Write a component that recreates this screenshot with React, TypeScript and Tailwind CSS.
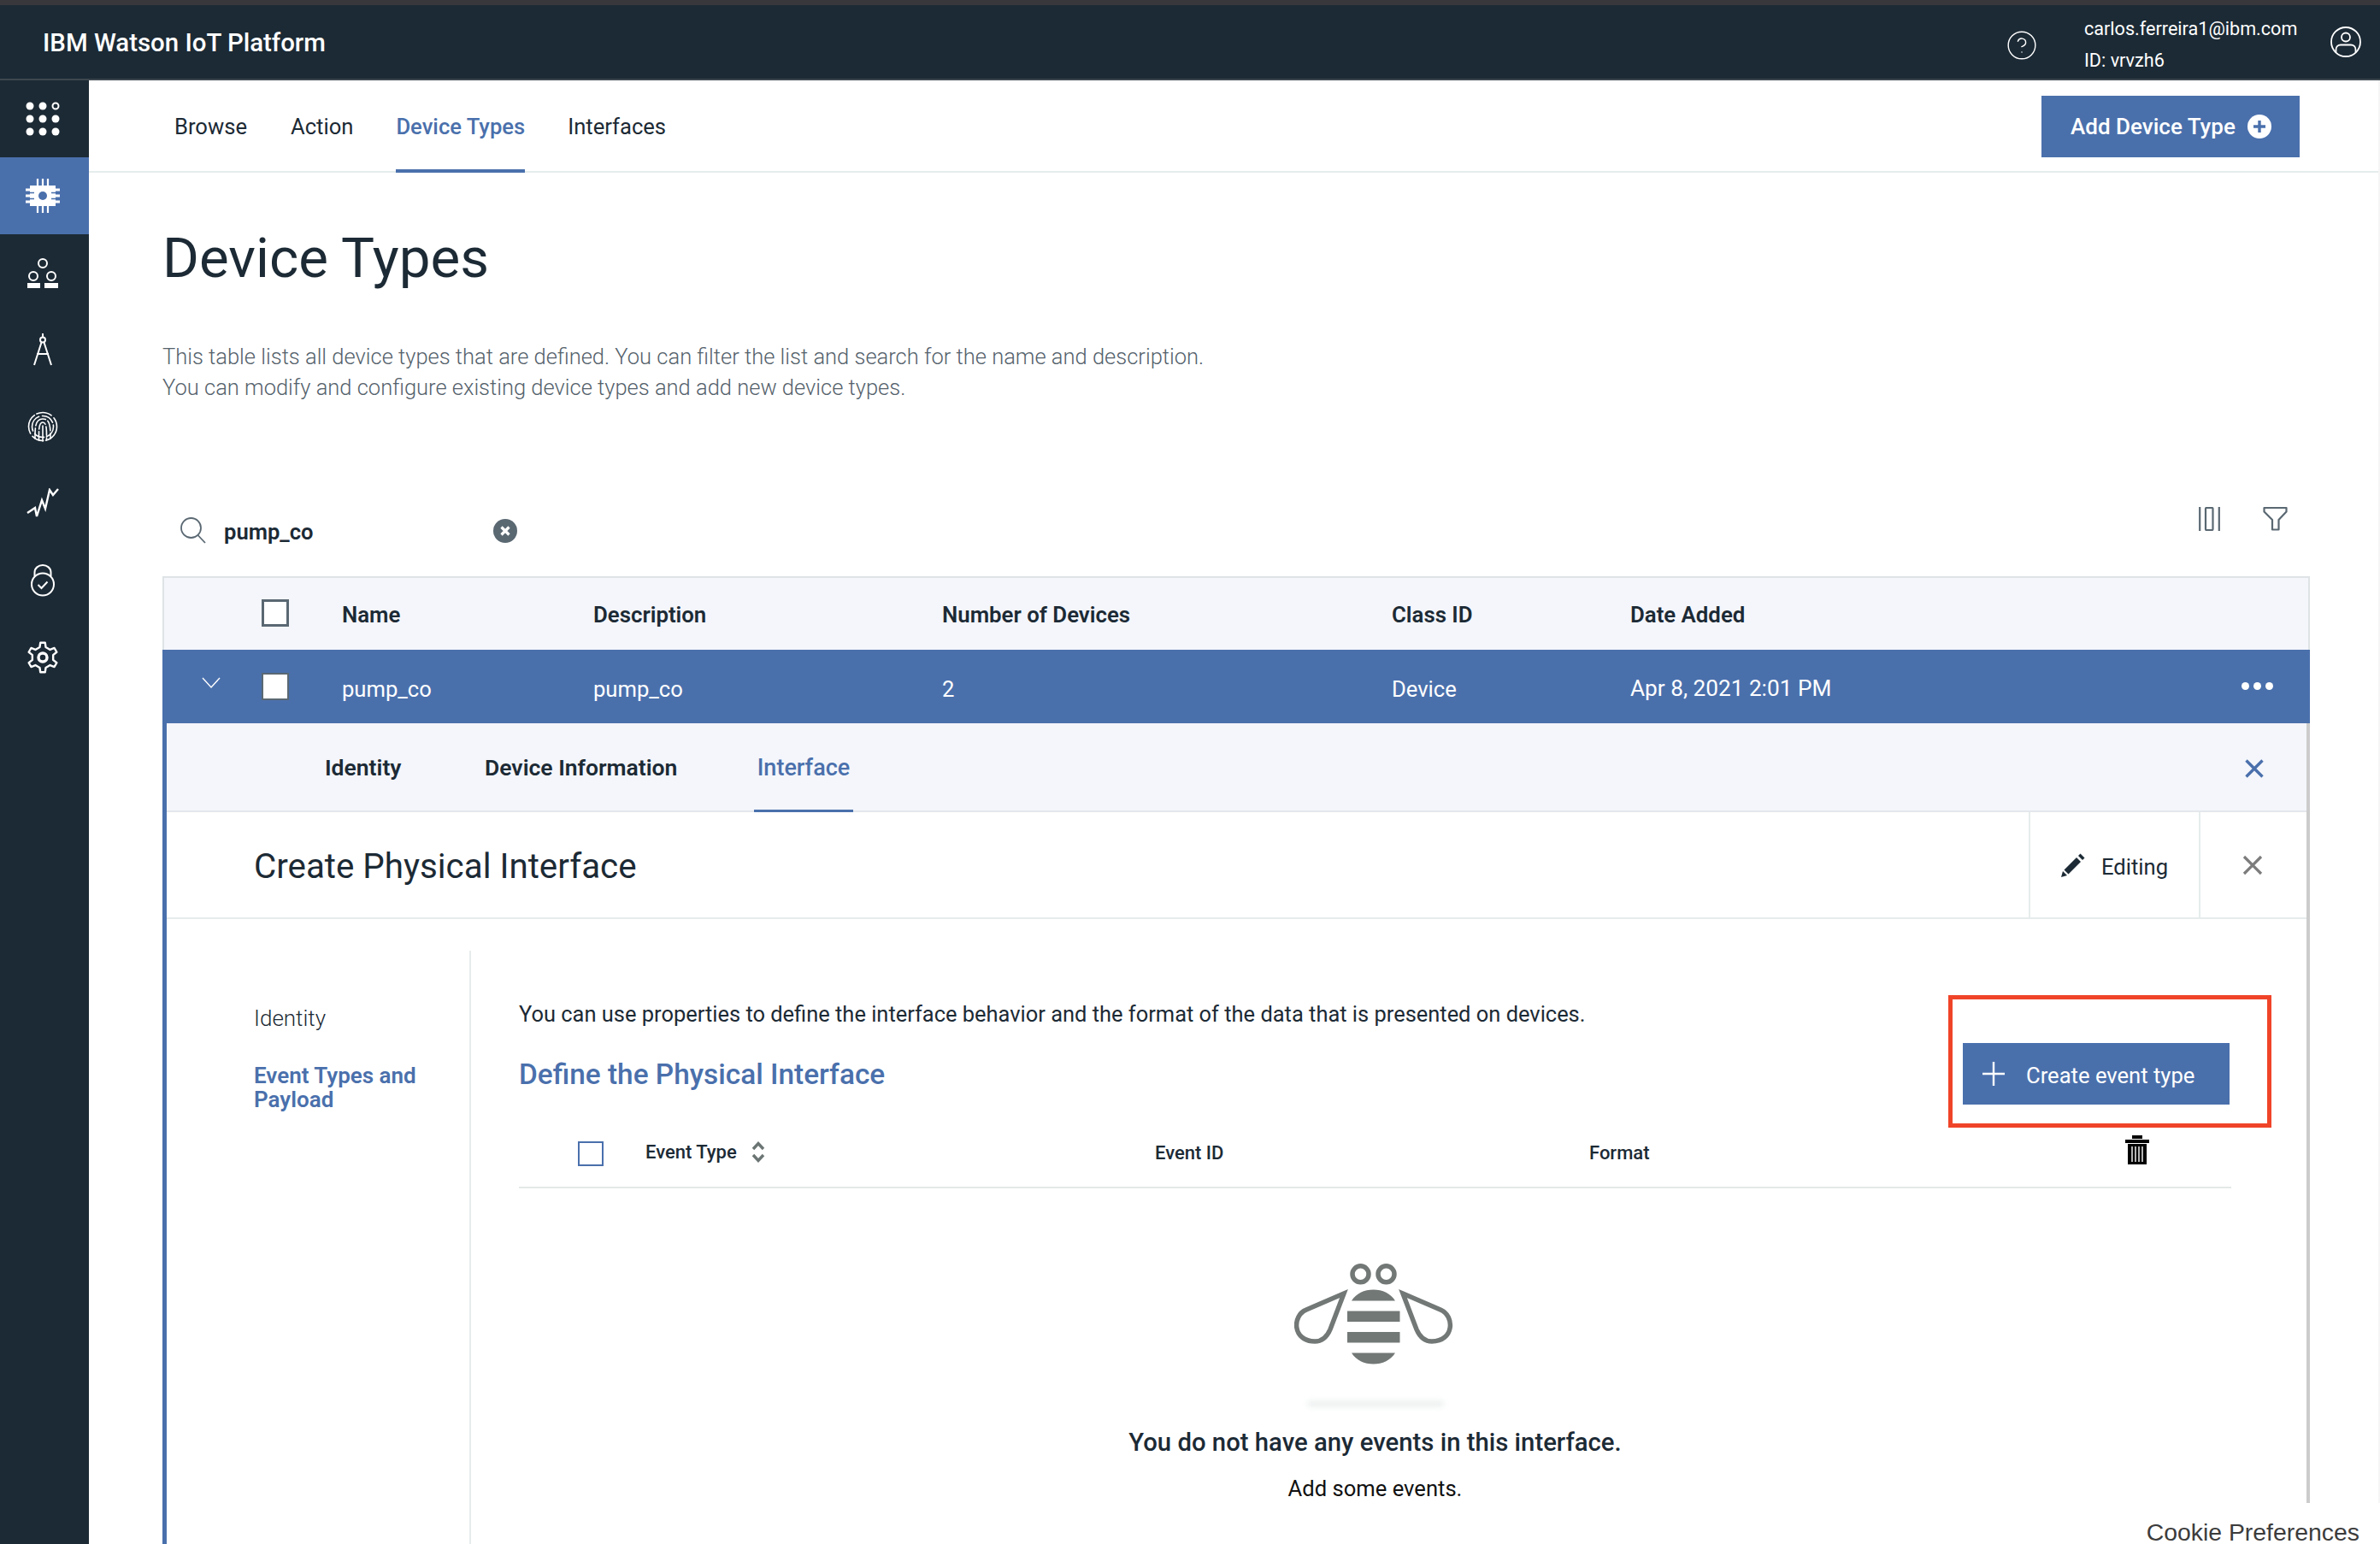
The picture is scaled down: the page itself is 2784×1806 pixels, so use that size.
import { CircleHelp } from "lucide-react"

const font = "font-['Roboto','Noto_Sans',sans-serif]"

const gearPath = (() => {
  const pts: string[] = []
  const teeth = 6
  for (let i = 0; i < teeth; i++) {
    const a = (i / teeth) * Math.PI * 2 - Math.PI / 2
    const step = Math.PI / teeth
    const p = (r: number, t: number) => `${(20 + r * Math.cos(t)).toFixed(2)} ${(20 + r * Math.sin(t)).toFixed(2)}`
    pts.push(p(17.5, a - step * 0.3), p(17.5, a + step * 0.3), p(12.5, a + step * 0.55), p(12.5, a + step * 1.45))
  }
  return "M" + pts.join("L") + "Z"
})()

function AppsIcon() {
  const xs = [5, 20, 35]
  return (
    <svg width="40" height="44" viewBox="0 0 40 44" className="block">
      {[7, 22, 37].map((y) =>
        xs.map((x) =>
          x === 35 && y === 7 ? (
            <circle key={x + "-" + y} cx={x} cy={y} r="3.5" fill="none" stroke="#fff" strokeWidth="2" />
          ) : (
            <circle key={x + "-" + y} cx={x} cy={y} r="4.5" fill="#fff" />
          ),
        ),
      )}
    </svg>
  )
}

function ChipIcon() {
  return (
    <svg width="40" height="40" viewBox="0 0 40 40" className="block">
      <rect x="5" y="8" width="30" height="24" fill="#fff" />
      <circle cx="20" cy="20" r="5" fill="#4a70ac" />
      <path d="M14 0V8M20 0V8M26 0V8M14 32V40M20 32V40M26 32V40" stroke="#fff" strokeWidth="2.2" />
      <path d="M0 13H5M0 20H5M0 27H5M35 13H40M35 20H40M35 27H40" stroke="#fff" strokeWidth="3" />
      <path d="M5 16.5H10M5 23.5H10M30 16.5H35M30 23.5H35" stroke="#4a70ac" strokeWidth="1.6" />
    </svg>
  )
}

function PeopleIcon() {
  return (
    <svg width="38" height="36" viewBox="0 0 38 36" className="block">
      <g fill="none" stroke="#fff" strokeWidth="2">
        <circle cx="19" cy="7" r="5" />
        <circle cx="8" cy="22" r="5" />
        <circle cx="29" cy="22" r="5" />
      </g>
      <rect x="1" y="30" width="15" height="6" fill="#fff" />
      <rect x="21" y="30" width="16" height="6" fill="#fff" />
    </svg>
  )
}

function CompassIcon() {
  return (
    <svg width="24" height="38" viewBox="0 0 24 38" className="block" fill="none" stroke="#fff" strokeWidth="2">
      <circle cx="12" cy="7.5" r="3" />
      <path d="M12 0V4M10.5 10.5L2 37M13.5 10.5L22 37M5 24H19" />
    </svg>
  )
}

function FingerprintIcon() {
  return (
    <svg width="36" height="38" viewBox="0 0 36 38" className="block" fill="none" stroke="#fff" strokeWidth="1.6" strokeLinecap="round">
      <circle cx="18" cy="19" r="16.5" strokeDasharray="22 3 14 4 24 3 18 4" />
      <circle cx="18" cy="19" r="12.5" strokeDasharray="15 3 12 4 20 4 15 3" />
      <path d="M9 33C9 20 9 10 18 10C27 10 27 20 27 33" strokeDasharray="12 3 16 3" />
      <path d="M13.5 35C13.5 24 13 14 18 14C23 14 22.5 24 22.5 35" strokeDasharray="10 3 14 3" />
      <path d="M18 18V36" />
    </svg>
  )
}

function ChartIcon() {
  return (
    <svg width="38" height="36" viewBox="0 0 38 36" className="block" fill="none" stroke="#fff" strokeWidth="2.4">
      <path d="M1 29L10 23L12 33L18 14L22 24L27 2L31 8L37 1" />
    </svg>
  )
}

function LockIcon() {
  return (
    <svg width="30" height="38" viewBox="0 0 30 38" className="block" fill="none" stroke="#fff" strokeWidth="2">
      <path d="M5.5 14V9.5C5.5 4.5 10 1 15 1C20 1 24.5 4.5 24.5 9.5V14" />
      <circle cx="15" cy="23.5" r="13" />
      <path d="M9.5 24L13.5 28L20.5 20.5" />
    </svg>
  )
}

function GearIcon() {
  return (
    <svg width="40" height="40" viewBox="0 0 40 40" className="block" fill="none" stroke="#fff" strokeLinejoin="round">
      <path d={gearPath} strokeWidth="2.4" />
      <circle cx="20" cy="20" r="5" strokeWidth="3.4" />
    </svg>
  )
}

const navIcons = [AppsIcon, ChipIcon, PeopleIcon, CompassIcon, FingerprintIcon, ChartIcon, LockIcon, GearIcon]

function Sidebar() {
  return (
    <aside className="w-[104px] shrink-0 bg-[#1c2a35]">
      {navIcons.map((Icon, i) => (
        <div key={i} className={`flex h-[90px] items-center justify-center pr-[5px] ${i === 1 ? "bg-[#4a70ac]" : ""}`}>
          <Icon />
        </div>
      ))}
    </aside>
  )
}

function TopBar() {
  return (
    <header className="flex h-[88px] shrink-0 items-center border-b-2 border-[#3d474e] bg-[#1c2a35] text-white">
      <div className="ml-[50px] pt-[2px] text-[29.4px] font-medium">IBM Watson IoT Platform</div>
      <div className="ml-auto flex items-center">
        <CircleHelp size={38} strokeWidth={0.9} className="mt-[8px]" />
        <div className="ml-[54px] mr-[34px] w-[253px] pt-[5px] text-[21.6px] leading-[37px]">
          <div>carlos.ferreira1@ibm.com</div>
          <div>ID: vrvzh6</div>
        </div>
        <svg width="38" height="38" viewBox="0 0 38 38" className="mr-[21px]" fill="none" stroke="#fff" strokeWidth="1.8">
          <circle cx="19" cy="19" r="17" />
          <circle cx="19" cy="13.5" r="5" />
          <path d="M7.5 31V28C7.5 24.5 10 22.5 13 22.5H25C28 22.5 30.5 24.5 30.5 28V31" />
        </svg>
      </div>
    </header>
  )
}

function SubNav() {
  return (
    <nav className="flex h-[108px] shrink-0 border-b-2 border-[#e6ecec] pl-[100px] pr-[92px] text-[25.6px] text-[#1c2a35]">
      <div className="flex h-[108px] items-center">Browse</div>
      <div className="ml-[51px] flex h-[108px] items-center">Action</div>
      <div className="ml-[50px] flex h-[108px] items-center border-b-4 border-[#4a70ac] pt-[4px] font-medium text-[#4a70ac]">Device Types</div>
      <div className="ml-[50px] flex h-[108px] items-center">Interfaces</div>
      <button className="ml-auto mt-[18px] flex h-[72px] w-[302px] items-center justify-center gap-[14px] bg-[#4a70ac] pl-[1px] text-[26px] font-medium text-white">
        Add Device Type
        <svg width="28" height="28" viewBox="0 0 28 28">
          <circle cx="14" cy="14" r="14" fill="#fff" />
          <path d="M14 7V21M7 14H21" stroke="#4a70ac" strokeWidth="3.4" />
        </svg>
      </button>
    </nav>
  )
}

function Check({ className }: { className: string }) {
  return <span className={`block h-[32px] w-[32px] ${className}`} />
}

function Cell({ children }: { children: React.ReactNode }) {
  return <div className="pt-[6px]">{children}</div>
}

function HeadCell({ children }: { children: React.ReactNode }) {
  return <div className="pt-[3px]">{children}</div>
}

function Tools() {
  return (
    <div className="flex h-[90px] shrink-0 text-[#1c2a35]">
      <svg width="30" height="31" viewBox="0 0 30 31" className="ml-[21px] mt-[21px]" fill="none" stroke="#5a6872" strokeWidth="1.8">
        <circle cx="12.5" cy="12.5" r="11.5" />
        <path d="M20.5 21L29 30" />
      </svg>
      <div className="ml-[21px] mt-[22px] w-[105px] text-[25.6px] font-semibold leading-[32px]">pump_co</div>
      <svg width="28" height="28" viewBox="0 0 28 28" className="ml-[210px] mt-[23px]">
        <circle cx="14" cy="14" r="14" fill="#5a6872" />
        <path d="M9.5 9.5L18.5 18.5M18.5 9.5L9.5 18.5" stroke="#fff" strokeWidth="3.2" />
      </svg>
      <svg width="25" height="28" viewBox="0 0 25 28" className="ml-auto mt-[9px]" fill="none" stroke="#5a6872" strokeWidth="2.2">
        <path d="M1.2 0V28M23.8 0V28" />
        <rect x="8" y="1" width="8.5" height="26" rx="1" />
      </svg>
      <svg width="29" height="29" viewBox="0 0 29 29" className="ml-[50px] mr-[26px] mt-[8px]" fill="none" stroke="#5a6872" strokeWidth="2.2" strokeLinejoin="round">
        <path d="M1.5 2H27.5V6.5L18.5 16V27.5H11V16L1.5 6.5Z" />
      </svg>
    </div>
  )
}

function TableHead() {
  return (
    <div className="grid h-[86px] shrink-0 grid-cols-[114px_94px_294px_408px_526px_279px_1fr] items-center border-x-2 border-t-2 border-[#dfe3e6] bg-[#f4f6fb] text-[25.8px] font-semibold text-[#1c2a35]">
      <span />
      <Check className="-mt-[2px] border-[3px] border-[#5a6872] bg-white" />
      <HeadCell>Name</HeadCell>
      <HeadCell>Description</HeadCell>
      <HeadCell>Number of Devices</HeadCell>
      <HeadCell>Class ID</HeadCell>
      <HeadCell>Date Added</HeadCell>
    </div>
  )
}

function TableRow() {
  return (
    <div className="grid h-[86px] shrink-0 grid-cols-[116px_94px_294px_408px_526px_279px_1fr] items-center bg-[#4a70ac] text-[25.6px] text-white">
      <svg width="22" height="14" viewBox="0 0 22 14" className="-mt-[8px] ml-[46px]" fill="none" stroke="#fff" strokeWidth="1.4">
        <path d="M1 1L11 12L21 1" />
      </svg>
      <Check className="border-[2px] border-[#5a6872] bg-white" />
      <Cell>pump_co</Cell>
      <Cell>pump_co</Cell>
      <Cell>2</Cell>
      <Cell>Device</Cell>
      <div className="flex items-center">
        <span className="pt-[6px] text-[26.2px]">Apr 8, 2021 2:01 PM</span>
        <div className="ml-auto mr-[43px] flex gap-[5px]">
          <span className="h-[9px] w-[9px] rounded-full bg-white" />
          <span className="h-[9px] w-[9px] rounded-full bg-white" />
          <span className="h-[9px] w-[9px] rounded-full bg-white" />
        </div>
      </div>
    </div>
  )
}

function PanelTabs() {
  return (
    <div className="flex h-[104px] shrink-0 border-b-2 border-[#e4e7ec] bg-[#f4f6fb] pl-[185px] text-[26.5px] font-semibold text-[#1c2a35]">
      <div className="flex h-[104px] w-[95px] items-center whitespace-nowrap">Identity</div>
      <div className="ml-[92px] flex h-[104px] w-[225px] items-center whitespace-nowrap">Device Information</div>
      <div className="ml-[90px] flex h-[104px] w-[116px] items-center justify-center border-b-[3px] border-[#4a70ac] pt-[3px] text-[27px] font-medium text-[#4a70ac]">Interface</div>
      <svg width="22" height="22" viewBox="0 0 22 22" className="ml-auto mr-[50px] mt-[42px]" fill="none" stroke="#4a70ac" strokeWidth="3.4">
        <path d="M1.5 1.5L20.5 20.5M20.5 1.5L1.5 20.5" />
      </svg>
    </div>
  )
}

function PanelHead() {
  return (
    <div className="flex h-[125px] shrink-0 items-stretch border-b-2 border-[#e6ecec] text-[#1c2a35]">
      <div className="ml-[102px] flex items-center pt-[5px] text-[40.3px]">Create Physical Interface</div>
      <div className="ml-auto flex w-[199px] items-center border-l-2 border-[#e6ecec] pl-[36px] text-[25.6px]">
        <svg width="28" height="28" viewBox="0 0 28 28" className="mr-[19px]" fill="#1c2a35">
          <path d="M0 28L2 21L7 26Z" />
          <path d="M3.5 19.5L18 5L23 10L8.5 24.5Z" />
          <path d="M20 3L22.5 0.5L27.5 5.5L25 8Z" />
        </svg>
        <span className="pt-[5px]">Editing</span>
      </div>
      <div className="flex w-[126px] items-center border-l-2 border-[#e6ecec] pl-[49px]">
        <svg width="24" height="24" viewBox="0 0 24 24" fill="none" stroke="#7c7c7c" strokeWidth="3.2">
          <path d="M2 2L22 22M22 2L2 22" />
        </svg>
      </div>
    </div>
  )
}

function Bee() {
  return (
    <svg width="186" height="118" viewBox="0 0 186 118" className="-ml-[4px] block">
      <g fill="none" stroke="#727876" strokeWidth="5.5">
        <circle cx="77.5" cy="12.3" r="9.5" />
        <circle cx="107.5" cy="12.3" r="9.5" />
        <path d="M58 35L14 54C-3 61 -2 91 24 91C34 91 39 84 42 77Z" />
        <path d="M127 35L171 54C188 61 187 91 161 91C151 91 146 84 143 77Z" />
      </g>
      <g fill="#727876">
        <path d="M67 43.5C72 35 82 30.5 92.5 30.5C103 30.5 113 35 118 43.5Z" />
        <rect x="62" y="55.5" width="61.5" height="12.5" />
        <rect x="62" y="80" width="61.5" height="12.5" />
        <path d="M67 104.5C72 113 82 117.5 92.5 117.5C103 117.5 113 113 118 104.5Z" />
      </g>
    </svg>
  )
}

function EventArea() {
  return (
    <div className="relative flex-1 pl-[56px]">
      <div className="mt-[93px] text-[25.45px] leading-[36px] text-[#1c2a35]">
        You can use properties to define the interface behavior and the format of the data that is presented on devices.
      </div>
      <div className="mt-[33px] text-[33.4px] font-medium leading-[40px] text-[#4a70ac]">Define the Physical Interface</div>
      <div className="relative mr-[88px] mt-[57px] flex h-[56px] items-start border-b-2 border-[#e3e8e8] text-[22px] font-medium leading-[28px] text-[#1c2a35]">
        <span className="ml-[69px] mt-[1px] block h-[29px] w-[30px] border-2 border-[#4a70ac]" />
        <div className="ml-[49px]">Event Type</div>
        <svg width="16" height="25" viewBox="0 0 16 25" className="ml-[17px] mt-[1px]" fill="none" stroke="#6b7573" strokeWidth="3.4">
          <path d="M2 9L8 2.5L14 9M2 16L8 22.5L14 16" />
        </svg>
        <div className="absolute left-[744px] top-[1px]">Event ID</div>
        <div className="absolute left-[1252px] top-[1px]">Format</div>
        <svg width="28" height="34" viewBox="0 0 28 34" className="absolute left-[1879px] -top-[6px]">
          <rect x="8" y="0" width="12" height="4" fill="#000" />
          <rect x="0" y="5" width="28" height="4" fill="#000" />
          <rect x="3" y="10" width="22" height="24" fill="#000" />
          <path d="M8 13V31M12 13V31M16 13V31M20 13V31" stroke="#fff" strokeWidth="1.4" />
        </svg>
      </div>
      <div className="mr-[88px] mt-[88px] flex flex-col items-center">
        <Bee />
        <div className="mt-[42px] h-[8px] w-[160px] rounded-full bg-[#eef1f1] blur-[3px]" />
        <div className="mt-[21px] text-[29.3px] font-medium leading-[40px] text-[#1c2a35]">You do not have any events in this interface.</div>
        <div className="mt-[16px] text-[25.6px] leading-[36px] text-[#111]">Add some events.</div>
      </div>
      {/* red annotation around the button */}
      <div className="absolute left-[1728px] top-[89px] flex h-[155px] w-[378px] border-[5px] border-[#f04429] pl-[12px] pt-[51px]">
        <button className="flex h-[72px] w-[312px] items-center bg-[#4a70ac] pl-[23px] text-[25.6px] text-white">
          <svg width="26" height="28" viewBox="0 0 26 28" className="mr-[25px]" fill="none" stroke="#fff" strokeWidth="2.4">
            <path d="M13 0V28M0 14H26" />
          </svg>
          <span className="pt-[4px]">Create event type</span>
        </button>
      </div>
    </div>
  )
}

function Panel() {
  return (
    <div className="flex flex-1 flex-col border-l-[5px] border-r-[4px] border-l-[#4a70ac] border-r-[#cccccc]">
      <PanelTabs />
      <PanelHead />
      <div className="flex flex-1">
        <div className="mt-[37px] w-[356px] shrink-0 border-r-2 border-[#e6ecec] pl-[102px] text-[26px] leading-[28px]">
          <div className="mt-[65px] font-light text-[#1c2a35]">Identity</div>
          <div className="mt-[39px] font-semibold text-[#4a70ac]">
            Event Types and
            <br />
            Payload
          </div>
        </div>
        <EventArea />
      </div>
    </div>
  )
}

export default function App() {
  return (
    <div className={`relative flex h-[1806px] w-[2784px] flex-col overflow-hidden bg-white ${font}`}>
      <div className="h-[6px] shrink-0 bg-[#38383c]" />
      <TopBar />
      <div className="flex min-h-0 flex-1">
        <Sidebar />
        <main className="flex min-w-0 flex-1 flex-col border-r-2 border-[#f5f5f5]">
          <SubNav />
          <div className="flex min-h-0 flex-1 flex-col pl-[86px] pr-[80px]">
            <h1 className="mt-[60px] text-[65.5px] leading-[80px] text-[#1c2a35]">Device Types</h1>
            <p className="mt-[57px] text-[25.5px] font-light leading-[36px] text-[#55626c]">
              This table lists all device types that are defined. You can filter the list and search for the name and description.
              <br />
              You can modify and configure existing device types and add new device types.
            </p>
            <div className="mt-[113px]">
              <Tools />
            </div>
            <TableHead />
            <TableRow />
            <Panel />
          </div>
        </main>
      </div>
      <div className="absolute bottom-0 right-0 h-[48px] w-[460px] bg-white pr-[24px] pt-[20px] text-right font-['Liberation_Sans',sans-serif] text-[28.4px] leading-[28px] text-[#3c3c3c]">
        Cookie Preferences
      </div>
    </div>
  )
}
